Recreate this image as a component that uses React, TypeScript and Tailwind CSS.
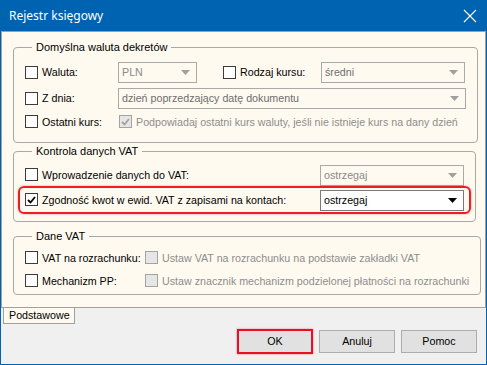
import React from "react";

const Check = ({ checked = false, disabled = false }: { checked?: boolean; disabled?: boolean }) => {
  const cls = disabled
    ? "w-[13px] h-[13px] border-[1.5px] border-[#a3a3a3] bg-[#e6e6e6] grid place-items-center shrink-0"
    : "w-[13px] h-[13px] border-[1.5px] border-[#3c3c3c] bg-white grid place-items-center shrink-0";
  return (
    <div className={cls}>
      {checked && (
        <svg width="9" height="8" viewBox="0 0 9 8">
          <path d="M1 4 L3.5 6.5 L8 1" fill="none" stroke={disabled ? "#a3a3a3" : "#000"} strokeWidth="1.8" />
        </svg>
      )}
    </div>
  );
};

const Select = ({ value, width, mode }: { value: string; width: string; mode: "off" | "dim" | "on" }) => {
  const box =
    mode === "on"
      ? "bg-white border-[#7a7a7a] text-black"
      : mode === "dim"
      ? "bg-[#fffaf0] border-[#a9a9a9] text-[#6d6d6d]"
      : "bg-[#fffaf0] border-[#a9a9a9] text-[#8a8a8a]";
  return (
    <div className={`${width} h-[21px] border flex items-center justify-between pl-[3px] pr-[6px] shrink-0 ${box}`}>
      <span>{value}</span>
      <svg width="9" height="5" viewBox="0 0 9 5">
        <path d="M0 0 H9 L4.5 5 Z" fill={mode === "on" ? "#000" : "#a0a0a0"} />
      </svg>
    </div>
  );
};

const Group = ({ title, children, className = "" }: { title: string; children: React.ReactNode; className?: string }) => (
  <fieldset className={`border border-[#a8a8a8] rounded-[4px] px-[11px] pt-[4px] ${className}`}>
    <legend className="ml-[7px] px-[4px] leading-[13px] text-[11px]">{title}</legend>
    {children}
  </fieldset>
);

const CheckLabel = ({ label, checked, w }: { label: string; checked?: boolean; w: string }) => (
  <div className={`flex items-center gap-[4px] ${w} shrink-0`}>
    <Check checked={checked} />
    <span>{label}</span>
  </div>
);

export default function App() {
  return (
    <div
      className="w-[487px] h-[365px] flex flex-col bg-[#0063b1] text-[10.7px] text-black whitespace-nowrap"
      style={{ fontFamily: '"Liberation Sans", Arial, sans-serif' }}
    >
      <div className="h-[31px] flex items-center justify-between pl-[9px] pr-[10px] text-white">
        <span className="text-[12px]" style={{ fontFamily: '"Noto Sans", sans-serif' }}>
          Rejestr księgowy
        </span>
        <svg width="14" height="14" viewBox="0 0 14 14">
          <path d="M1 1 L13 13 M13 1 L1 13" stroke="#fff" strokeWidth="1.1" />
        </svg>
      </div>

      <div className="flex-1 mx-[1px] mb-[1px] bg-[#f0f0f0] flex flex-col">
        <div className="h-[277px] bg-[#fffaf0] border border-[#a0a0a0] pl-[11px] pr-[9px] pt-[9px] flex flex-col">
          <Group title="Domyślna waluta dekretów" className="pb-[11px]">
            <div className="flex flex-col pt-[4px]">
              <div className="flex items-center h-[21px]">
                <CheckLabel label="Waluta:" w="w-[93px]" />
                <Select value="PLN" width="w-[79px]" mode="off" />
                <div className="w-[26px] shrink-0" />
                <CheckLabel label="Rodzaj kursu:" w="w-[98px]" />
                <Select value="średni" width="w-[144px]" mode="dim" />
              </div>
              <div className="flex items-center h-[21px] mt-[5px]">
                <CheckLabel label="Z dnia:" w="w-[93px]" />
                <Select value="dzień poprzedzający datę dokumentu" width="w-[348px]" mode="dim" />
              </div>
              <div className="flex items-center h-[18px] mt-[4px]">
                <CheckLabel label="Ostatni kurs:" w="w-[94px]" />
                <div className="flex items-center gap-[4px] text-[#8d8d8d]">
                  <Check checked disabled />
                  <span>Podpowiadaj ostatni kurs waluty, jeśli nie istnieje kurs na dany dzień</span>
                </div>
              </div>
            </div>
          </Group>

          <Group title="Kontrola danych VAT" className="mt-[2px] pb-[7px]">
            <div className="flex flex-col pt-[3px]">
              <div className="flex items-center justify-between h-[20px]">
                <CheckLabel label="Wprowadzenie danych do VAT:" w="w-[200px]" />
                <Select value="ostrzegaj" width="w-[144px]" mode="off" />
              </div>
              <div className="mt-[1px] -mx-[7px] px-[5px] h-[28px] border-2 border-[#ee1c24] rounded-[6px] shadow-[0_0_2px_rgba(238,28,36,0.5)] flex items-center justify-between">
                <CheckLabel label="Zgodność kwot w ewid. VAT z zapisami na kontach:" checked w="w-[270px]" />
                <Select value="ostrzegaj" width="w-[144px]" mode="on" />
              </div>
            </div>
          </Group>

          <Group title="Dane VAT" className="mt-[8px] pb-[4px]">
            <div className="flex flex-col gap-[5px] pt-[2px]">
              {[
                ["VAT na rozrachunku:", "Ustaw VAT na rozrachunku na podstawie zakładki VAT"],
                ["Mechanizm PP:", "Ustaw znacznik mechanizm podzielonej płatności na rozrachunki"],
              ].map(([label, hint]) => (
                <div key={label} className="flex items-center h-[18px]">
                  <CheckLabel label={label} w="w-[120px]" />
                  <div className="flex items-center gap-[4px] text-[#8d8d8d]">
                    <Check disabled />
                    <span>{hint}</span>
                  </div>
                </div>
              ))}
            </div>
          </Group>
        </div>

        <div className="flex">
          <div className="ml-[2px] h-[16px] w-[72px] bg-[#fffaf0] border border-t-0 border-[#a0a0a0] pl-[5px] flex items-center">
            Podstawowe
          </div>
        </div>

        <div className="flex justify-end gap-[6px] pr-[9px] pt-[5px]">
          <div className="w-[76px] h-[25px] border-2 border-[#e81123] bg-[#e1e1e1] grid place-items-center shadow-[0_0_2px_rgba(232,17,35,0.5)]">
            OK
          </div>
          <div className="w-[76px] h-[23px] mt-[1px] border border-[#adadad] bg-[#e1e1e1] grid place-items-center">
            Anuluj
          </div>
          <div className="w-[76px] h-[23px] mt-[1px] border border-[#adadad] bg-[#e1e1e1] grid place-items-center">
            Pomoc
          </div>
        </div>
      </div>
    </div>
  );
}
